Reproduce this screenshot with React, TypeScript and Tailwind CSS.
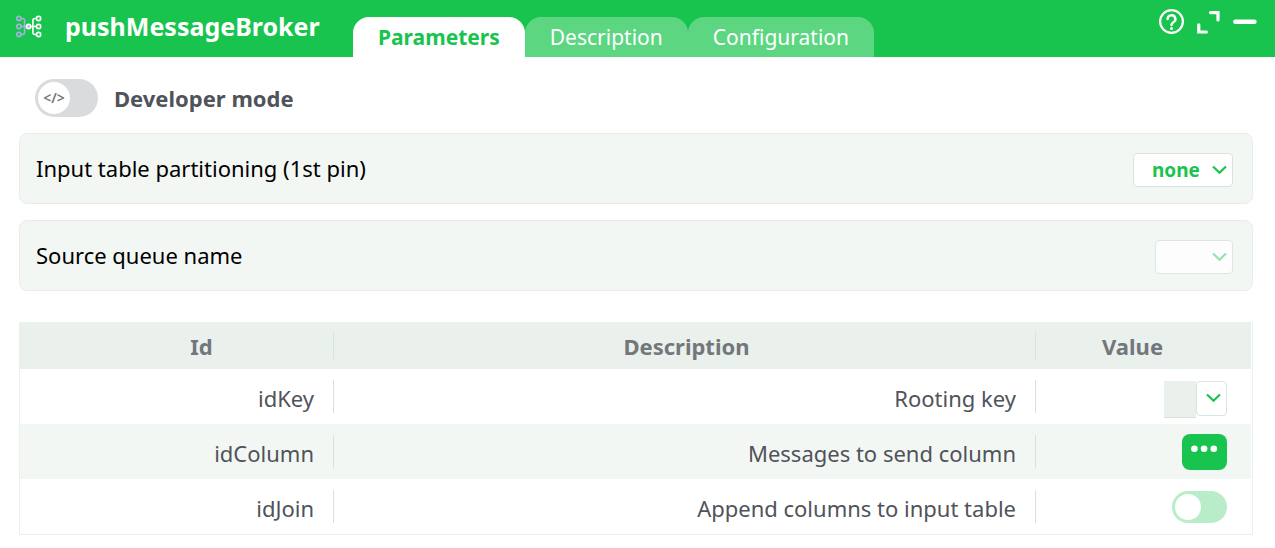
import { useState } from "react";
import type { ReactNode } from "react";

const tabs = ["Parameters", "Description", "Configuration"];

function BrokerIcon() {
  return (
    <svg width="26" height="24" viewBox="0 0 26 24" fill="none" strokeWidth="1.6" aria-hidden="true">
      <g stroke="#a5b3dc">
        <circle cx="2.9" cy="3.5" r="2.1" />
        <circle cx="2.9" cy="11.5" r="2.1" />
        <circle cx="2.9" cy="19.5" r="2.1" />
        <path d="M5 3.5h1.6q2 0 2 2v12q0 2-2 2H5M5 11.5h5.3" />
      </g>
      <g stroke="#fff">
        <circle cx="22.6" cy="3.5" r="2.1" />
        <circle cx="22.6" cy="11.5" r="2.1" />
        <circle cx="22.6" cy="19.5" r="2.1" />
        <path d="M20.5 3.5h-1.6q-2 0-2 2v12q0 2 2 2h1.6M20.5 11.5h-5.6" />
        <circle cx="12.6" cy="11.5" r="2.1" fill="#a5b3dc" />
      </g>
    </svg>
  );
}

function Chevron({ className }: { className: string }) {
  return (
    <svg
      className={`pointer-events-none absolute ${className}`}
      width="16"
      height="10"
      viewBox="0 0 16 10"
      fill="none"
      stroke="#18c44d"
      strokeWidth="2.2"
      aria-hidden="true"
    >
      <path d="M2 1.5L8.5 7.7L15 1.5" />
    </svg>
  );
}

function Panel({ label, htmlFor, children }: { label: string; htmlFor: string; children: ReactNode }) {
  return (
    <div className="flex h-[71px] items-center justify-between rounded-lg border border-[#e9ecea] bg-[#f3f7f4] pt-0.5 pr-[19px] pl-4 text-black">
      <label htmlFor={htmlFor} className="pb-1">
        {label}
      </label>
      {children}
    </div>
  );
}

function Row({ id, description, children }: { id: string; description: string; children: ReactNode }) {
  return (
    <tr className="h-[55px] even:bg-[#f3f7f4]">
      <td className="p-0">
        <div className="flex h-[33px] items-center justify-end border-r border-[#d8e2dd] pt-0.5 pr-[19px]">{id}</div>
      </td>
      <td className="p-0">
        <div className="flex h-[33px] items-center justify-end border-r border-[#d8e2dd] pt-0.5 pr-[19px]">
          {description}
        </div>
      </td>
      <td className="py-0 pr-6 pl-0">
        <div className="flex justify-end">{children}</div>
      </td>
    </tr>
  );
}

export default function App() {
  const [active, setActive] = useState("Parameters");
  const [developer, setDeveloper] = useState(false);
  const [append, setAppend] = useState(false);

  return (
    <div className="bg-white font-['Noto_Sans',sans-serif] text-[22px] leading-[30px] text-[#50535a]">
      <header className="flex h-[57px] items-end bg-[#18c44d] text-white">
        <div className="flex h-full w-[353px] shrink-0 items-center gap-[23px] pb-[3px] pl-4">
          <BrokerIcon />
          <h1 className="pb-0.5 text-[25px] font-bold">pushMessageBroker</h1>
        </div>
        <nav className="flex text-[21px]" role="tablist">
          {tabs.map((tab) => (
            <button
              key={tab}
              type="button"
              role="tab"
              aria-selected={active === tab}
              onClick={() => setActive(tab)}
              className={`h-10 rounded-t-2xl px-[25px] ${
                active === tab ? "bg-white font-bold text-[#18c44d]" : "bg-[#5dd682] text-white"
              }`}
            >
              {tab}
            </button>
          ))}
        </nav>
        <div className="ml-auto flex h-full items-center gap-3 pr-[18px] pb-[14px]">
          <button type="button" aria-label="Help">
            <svg width="26" height="26" viewBox="0 0 26 26" fill="none" stroke="#fff" strokeWidth="2.2">
              <circle cx="12.5" cy="12.5" r="11.4" />
              <path d="M8.6 10a3.9 3.7 0 1 1 5.8 3.2c-1.3.7-1.9 1.3-1.9 2.8" strokeWidth="2.4" strokeLinecap="round" />
              <circle cx="12.5" cy="19.5" r="1.5" fill="#fff" stroke="none" />
            </svg>
          </button>
          <button type="button" aria-label="Expand">
            <svg width="24" height="24" viewBox="0 0 24 24" fill="none" stroke="#fff" strokeWidth="3.2" strokeLinecap="round">
              <path d="M13.5 2.6H21V10M1.8 14.8v7.2H9.4" />
            </svg>
          </button>
          <button type="button" aria-label="Minimize">
            <svg width="24" height="24" viewBox="0 0 24 24" fill="none" stroke="#fff" strokeWidth="4.6" strokeLinecap="round">
              <path d="M2.4 11.7h19" />
            </svg>
          </button>
        </div>
      </header>

      <main className="pr-[22px] pb-3 pl-[19px]">
        <label className="flex h-[76px] items-center gap-4 pt-1.5 pl-4 font-bold">
          <span className="relative flex">
            <input
              type="checkbox"
              checked={developer}
              onChange={(e) => setDeveloper(e.target.checked)}
              className="peer h-[38px] w-[63px] appearance-none rounded-full bg-[#dadbdd] checked:bg-[#18c44d]"
            />
            <span
              aria-hidden="true"
              className="absolute top-[3px] left-[3px] flex size-8 items-center justify-center rounded-full bg-white text-sm font-semibold text-[#73777c] peer-checked:left-7"
            >
              {"</>"}
            </span>
          </span>
          Developer mode
        </label>

        <div className="flex flex-col gap-4">
          <Panel label="Input table partitioning (1st pin)" htmlFor="partitioning">
            <span className="relative flex">
              <select
                id="partitioning"
                className="h-[34px] w-[100px] appearance-none rounded border border-[#d8e5dd] bg-white pl-[18px] text-[19px] leading-7 font-bold text-[#18c44d]"
              >
                <option>none</option>
              </select>
              <Chevron className="top-3 right-[6px]" />
            </span>
          </Panel>
          <Panel label="Source queue name" htmlFor="queue">
            <span className="relative flex">
              <select
                id="queue"
                disabled
                className="h-[34px] w-[78px] appearance-none rounded border border-[#dde7e1] bg-[#fcfdfc]"
              >
                <option></option>
              </select>
              <Chevron className="top-3 right-[6px] opacity-45" />
            </span>
          </Panel>
        </div>

        <div className="mt-[31px] border border-t-0 border-[#eaf0ec] pr-px">
          <table className="w-full table-fixed border-collapse">
            <thead>
              <tr className="h-[47px] bg-[#eaf0ec] font-bold text-[#73777c]">
                <th className="w-[314px] p-0">
                  <div className="flex h-[27px] items-center justify-center border-r border-[#dae2dd] pl-[50px]">Id</div>
                </th>
                <th className="p-0">
                  <div className="flex h-[27px] items-center justify-center border-r border-[#dae2dd] pl-1">
                    Description
                  </div>
                </th>
                <th className="w-[215px] p-0">
                  <div className="flex h-[27px] items-center justify-center pr-[22px]">Value</div>
                </th>
              </tr>
            </thead>
            <tbody>
              <Row id="idKey" description="Rooting key">
                <div className="flex pt-1.5">
                  <input
                    aria-label="Rooting key"
                    className="h-[37px] w-8 border-b border-[#d8e2dd] bg-[#eaf0ec] px-1 outline-none"
                  />
                  <span className="relative flex">
                    <select
                      aria-label="Rooting key type"
                      className="h-[35px] w-[31px] appearance-none rounded border border-[#d8e5e0] bg-white"
                    >
                      <option></option>
                    </select>
                    <Chevron className="top-3 right-[6px]" />
                  </span>
                </div>
              </Row>
              <Row id="idColumn" description="Messages to send column">
                <button
                  type="button"
                  aria-label="Choose messages column"
                  className="flex h-9 w-[45px] justify-center rounded-lg bg-[#18c44d] pt-[11px]"
                >
                  <svg width="27" height="8" viewBox="0 0 27 8" fill="#fff">
                    <circle cx="3.4" cy="3.8" r="3.3" />
                    <circle cx="13.1" cy="3.8" r="3.3" />
                    <circle cx="22.8" cy="3.8" r="3.3" />
                  </svg>
                </button>
              </Row>
              <Row id="idJoin" description="Append columns to input table">
                <input
                  type="checkbox"
                  aria-label="Append columns to input table"
                  checked={append}
                  onChange={(e) => setAppend(e.target.checked)}
                  className="flex h-8 w-[55px] appearance-none items-center rounded-full bg-[#b9edc9] px-[3px] before:size-[26px] before:rounded-full before:bg-white checked:justify-end checked:bg-[#18c44d]"
                />
              </Row>
            </tbody>
          </table>
        </div>
      </main>
    </div>
  );
}
